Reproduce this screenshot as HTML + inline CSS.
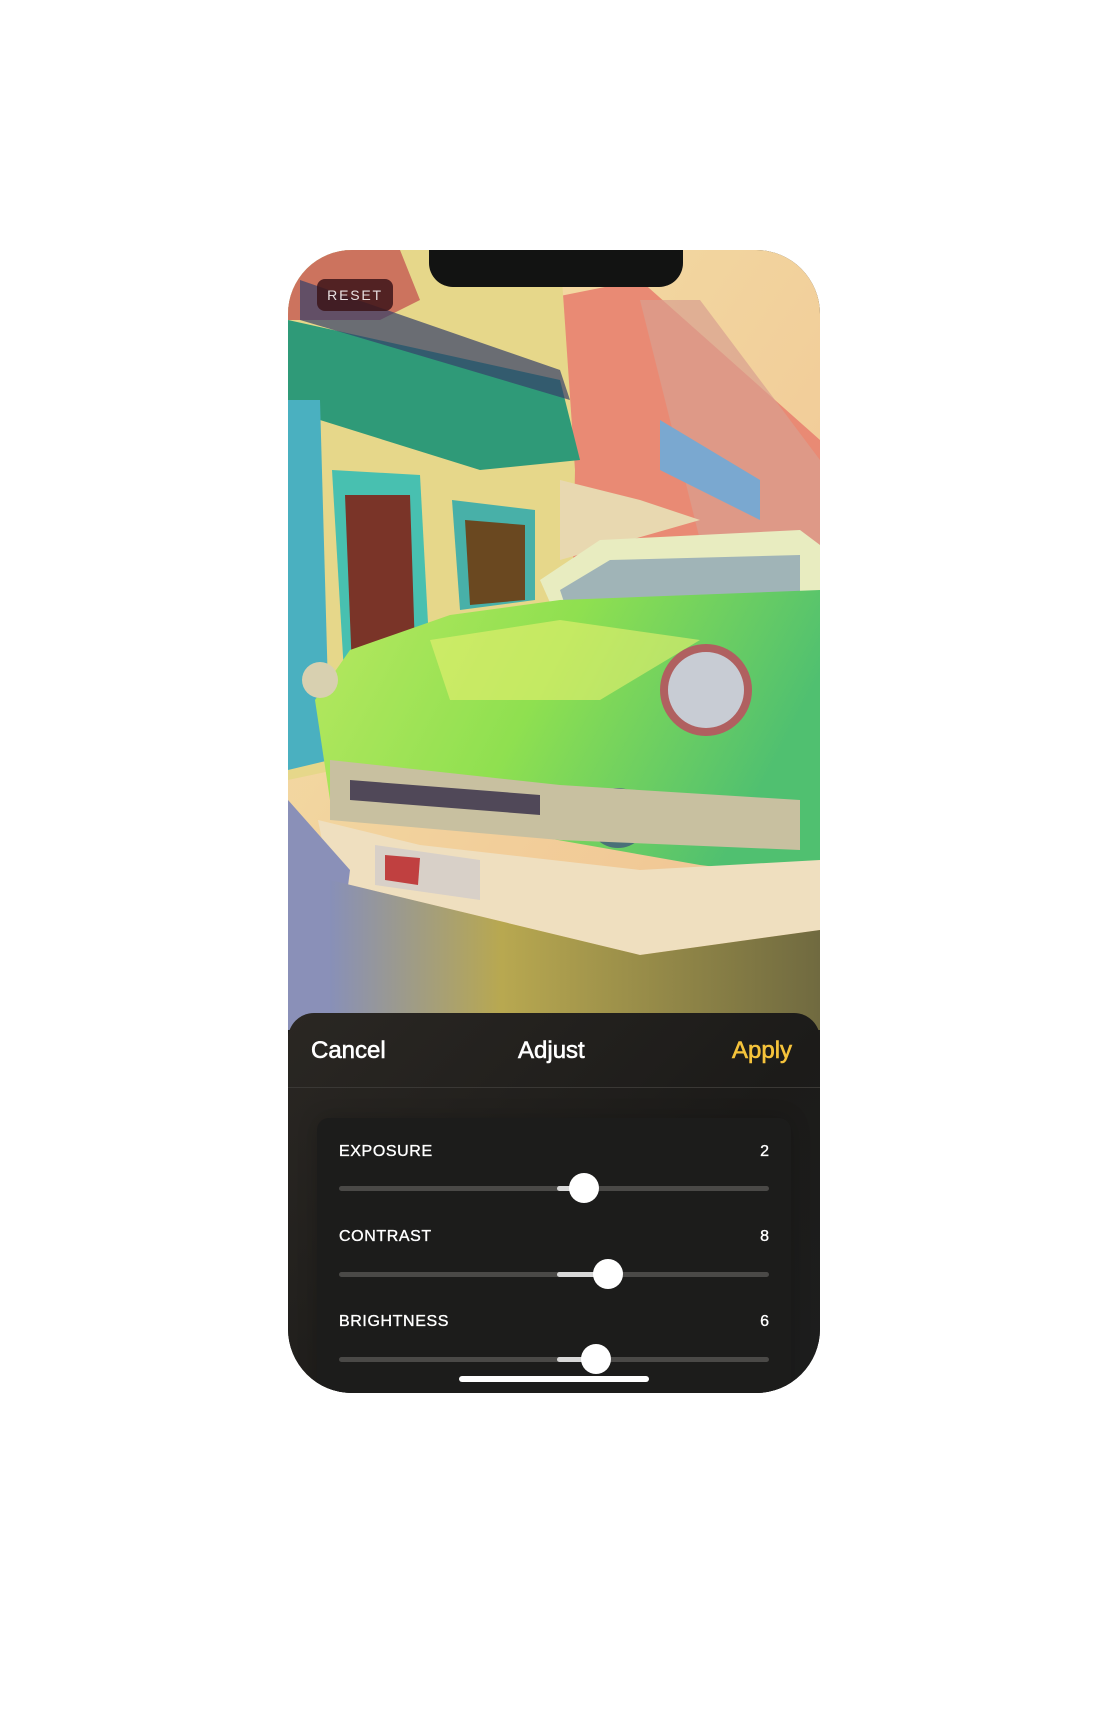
<!DOCTYPE html>
<html><head><meta charset="utf-8"><style>
html,body{margin:0;padding:0;background:#fff;width:1112px;height:1720px;overflow:hidden;font-family:"Liberation Sans",sans-serif}
.phone{position:absolute;left:288px;top:250px;width:532px;height:1143px;border-radius:64px;overflow:hidden;background:#1e1d1b}
svg.img{position:absolute;left:0;top:0}
.notch{position:absolute;left:141px;top:0;width:254px;height:37px;background:#121312;border-radius:0 0 24px 24px}
.reset{position:absolute;left:29px;top:29px;width:76px;height:32px;border-radius:8px;background:rgba(60,20,25,.85);color:#e8e0e0;font-size:14px;letter-spacing:1.8px;line-height:32px;text-align:center}
.panel{position:absolute;left:0;top:763px;width:532px;height:400px;background:linear-gradient(135deg,#2a2723,#1c1b19 60%,#1d1e1e);border-radius:26px 26px 0 0}
.hdr{position:absolute;top:20px;font-size:24px;color:#fff;line-height:36px;-webkit-text-stroke:0.6px currentColor}
.sep{position:absolute;left:0;right:0;top:74px;height:1px;background:#3a3835}
.card{position:absolute;left:29px;top:105px;width:474px;height:320px;background:#1c1c1b;border-radius:12px;box-shadow:0 0 20px rgba(0,0,0,.2)}
.lab{position:absolute;left:22px;font-size:16px;color:#fff;letter-spacing:.6px;line-height:20px;-webkit-text-stroke:0.35px #fff}
.val{position:absolute;right:22px;font-size:16px;color:#fff;line-height:20px;-webkit-text-stroke:0.35px #fff}
.trk{position:absolute;left:22px;width:430px;height:5px;border-radius:3px;background:#4a4947}
.fill{position:absolute;height:5px;background:#d8d8d8;border-radius:3px}
.th{position:absolute;width:30px;height:30px;border-radius:50%;background:#fff}
.home{position:absolute;left:171px;top:1126px;width:190px;height:6px;border-radius:3px;background:#fff}
</style></head><body>
<div class="phone">
<svg class="img" width="532" height="780" viewBox="288 250 532 780">
<defs>
<linearGradient id="sky" x1="0" y1="0" x2="1" y2="1"><stop offset="0" stop-color="#f4e2a8"/><stop offset="1" stop-color="#f0c090"/></linearGradient>
<linearGradient id="car" x1="0" y1="0" x2="1" y2="0.3"><stop offset="0" stop-color="#b8e860"/><stop offset=".5" stop-color="#8fe050"/><stop offset="1" stop-color="#50c070"/></linearGradient>
<linearGradient id="gnd" x1="0" y1="0" x2="1" y2="0"><stop offset="0" stop-color="#8890b8"/><stop offset=".35" stop-color="#b8a850"/><stop offset="1" stop-color="#706a40"/></linearGradient>
</defs>
<rect x="288" y="250" width="532" height="780" fill="url(#sky)"/>
<polygon points="540,300 640,280 820,440 820,580 560,580" fill="#e98a74"/>
<polygon points="640,300 700,300 820,460 820,560 700,540" fill="#d9a090" opacity=".7"/>
<polygon points="660,420 760,480 760,520 660,470" fill="#7aa8d0"/>
<polygon points="288,250 560,250 575,470 570,720 288,780" fill="#e6d78a"/>
<polygon points="288,250 400,250 420,300 380,320 288,320" fill="#c0484c" opacity=".7"/>
<polygon points="288,320 560,380 580,460 480,470 288,410" fill="#2f9a78"/>
<polygon points="300,280 560,370 570,400 300,320" fill="#35406a" opacity=".7"/>
<polygon points="288,400 320,400 330,760 288,770" fill="#4ab0c0"/>
<polygon points="332,470 420,475 430,660 345,690" fill="#48c0b0"/>
<polygon points="345,495 410,495 415,650 352,670" fill="#7a3428"/>
<polygon points="452,500 535,510 535,600 460,610" fill="#48b0a8"/>
<polygon points="465,520 525,525 525,600 470,605" fill="#6a4820"/>
<polygon points="560,480 640,500 700,520 560,560" fill="#e8d8b0"/>
<polygon points="540,580 600,540 800,530 820,545 820,620 560,625" fill="#e8ecc0"/>
<polygon points="560,590 610,560 800,555 800,610 570,620" fill="#7090b0" opacity=".6"/>
<polygon points="315,700 350,650 450,615 560,600 820,590 820,880 700,865 330,800" fill="url(#car)"/>
<polygon points="430,640 560,620 700,640 600,700 450,700" fill="#e8f070" opacity=".6"/>
<circle cx="706" cy="690" r="46" fill="#b06060"/>
<circle cx="706" cy="690" r="38" fill="#c8ccd4"/>
<circle cx="618" cy="818" r="30" fill="#4a7078"/>
<circle cx="618" cy="818" r="20" fill="#d8c8a0"/>
<circle cx="320" cy="680" r="18" fill="#d8d0b0"/>
<polygon points="330,760 560,785 800,800 800,850 560,840 330,820" fill="#c8c0a0"/>
<polygon points="350,780 540,795 540,815 350,800" fill="#504858"/>
<polygon points="318,820 420,845 640,870 820,860 820,930 640,955 330,880" fill="#efdfbf"/>
<polygon points="375,845 480,860 480,900 375,885" fill="#d8d0c8"/>
<polygon points="385,855 420,858 418,885 385,880" fill="#c04040"/>
<polygon points="288,800 350,870 330,1030 288,1030" fill="#8a90b8"/>
<polygon points="330,880 640,955 820,930 820,1030 330,1030" fill="url(#gnd)"/>
</svg>
<div class="notch"></div>
<div class="reset">RESET</div>
<div class="panel">
<div class="hdr" style="left:23px">Cancel</div>
<div class="hdr" style="left:230px">Adjust</div>
<div class="hdr" style="left:444px;color:#f5c33b">Apply</div>
<div class="sep"></div>
<div class="card">
<div class="lab" style="top:24px">EXPOSURE</div><div class="val" style="top:24px">2</div>
<div class="trk" style="top:68px"></div><div class="fill" style="left:240px;width:30px;top:68px"></div><div class="th" style="left:252px;top:55px"></div>
<div class="lab" style="top:109px">CONTRAST</div><div class="val" style="top:109px">8</div>
<div class="trk" style="top:154px"></div><div class="fill" style="left:240px;width:50px;top:154px"></div><div class="th" style="left:276px;top:141px"></div>
<div class="lab" style="top:194px">BRIGHTNESS</div><div class="val" style="top:194px">6</div>
<div class="trk" style="top:239px"></div><div class="fill" style="left:240px;width:40px;top:239px"></div><div class="th" style="left:264px;top:226px"></div>
</div>
</div>
<div class="home"></div>
</div>
</body></html>
